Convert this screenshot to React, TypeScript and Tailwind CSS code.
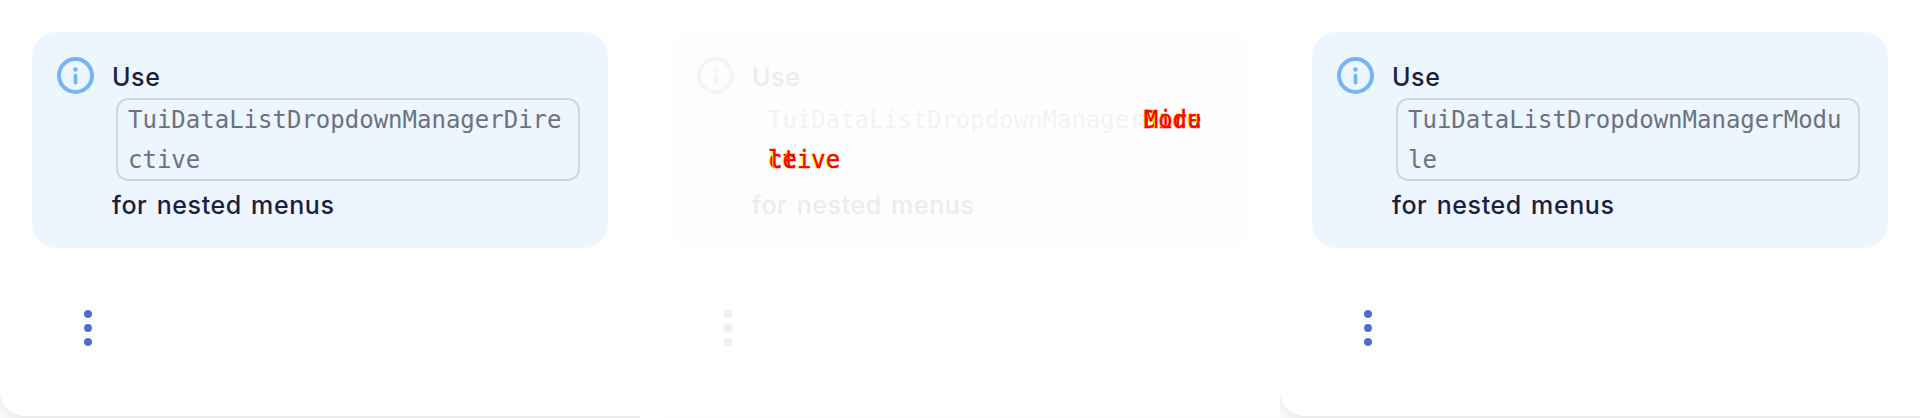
const CODE_FONT = "font-['DejaVu_Sans_Mono',monospace]";

function InfoIcon({ className }: { className: string }) {
  return (
    <svg viewBox="0 0 37 37" className={className} fill="none">
      <circle cx="18.5" cy="18.5" r="16.5" stroke="currentColor" strokeWidth="4" />
      <circle cx="18.5" cy="12.5" r="2.2" fill="currentColor" />
      <path d="M18.5 18.5v7" stroke="currentColor" strokeWidth="3.8" strokeLinecap="round" />
    </svg>
  );
}

function DotsIcon({ color }: { color: string }) {
  return (
    <div className="ml-[52px] mt-[62px] flex flex-col gap-[6px]">
      <span className={`block h-[8px] w-[8px] rounded-full ${color}`} />
      <span className={`block h-[8px] w-[8px] rounded-full ${color}`} />
      <span className={`block h-[8px] w-[8px] rounded-full ${color}`} />
    </div>
  );
}

function Notice({ name }: { name: string }) {
  return (
    <div className="flex h-[216px] rounded-[24px] bg-[#edf5fe] pl-[25px] pt-[25px]">
      <InfoIcon className="h-[37px] w-[37px] shrink-0 text-[#70b6f8]" />
      <div className="ml-[18px] flex w-[470px] flex-col text-[25px] font-[450] leading-[40px] tracking-[0.6px] [word-spacing:2px] text-[#1b1f3b]">
        <div className="h-[41px]">Use</div>
        <code
          className={`ml-[4px] h-[83px] w-[464px] rounded-[12px] border-2 border-[#cfd6e2] pl-[10px] pr-[10px] text-[24px] font-normal leading-[40px] tracking-normal [word-spacing:0] break-all text-[#6b7280] ${CODE_FONT}`}
        >
          {name}
        </code>
        <div className="mt-[4px]">for nested menus</div>
      </div>
    </div>
  );
}

// two words caught on top of each other mid-transition
function Overlap({ a, b }: { a: string; b: string }) {
  const glitch = "text-[#ff0000] [-webkit-text-stroke:0.4px_#ff0000] [text-shadow:-1px_0_0_#ffff00]";
  return (
    <span className={`relative inline-block ${glitch}`}>
      {a}
      <span className="absolute left-0 top-0">{b}</span>
    </span>
  );
}

function FadedNotice() {
  return (
    <div className="flex h-[216px] rounded-[24px] bg-[#fdfdfd] pl-[25px] pt-[25px]">
      <InfoIcon className="h-[37px] w-[37px] shrink-0 text-[#f5f5f5]" />
      <div className="ml-[18px] flex w-[470px] flex-col text-[25px] font-[450] leading-[40px] tracking-[0.6px] [word-spacing:2px] text-[#ececec]">
        <div className="h-[41px]">Use</div>
        <code
          className={`ml-[4px] h-[83px] w-[464px] rounded-[12px] border-2 border-[#fefefe] bg-[#fefefe] pl-[10px] pr-[10px] text-[24px] font-normal leading-[40px] tracking-normal [word-spacing:0] break-all text-[#f3f3f3] ${CODE_FONT}`}
        >
          TuiDataListDropdownManager
          <Overlap a="Dire" b="Modu" />
          <Overlap a="ctive" b="le" />
        </code>
        <div className="mt-[4px]">for nested menus</div>
      </div>
    </div>
  );
}

function Panel({ children }: { children: React.ReactNode }) {
  return (
    <div className="h-[418px] w-[640px] shrink-0 overflow-hidden">
      <div className="h-[416px] w-[720px] rounded-b-[24px] bg-white px-[32px] pt-[32px] shadow-[0_4px_16px_rgba(0,0,0,0.12)]">
        <div className="w-[576px]">{children}</div>
      </div>
    </div>
  );
}

export default function App() {
  return (
    <div className="flex h-[418px] w-[1920px] overflow-hidden bg-white font-['Inter',sans-serif]">
      <Panel>
        <Notice name="TuiDataListDropdownManagerDirective" />
        <DotsIcon color="bg-[#526ed3]" />
      </Panel>
      <div className="h-[418px] w-[640px] shrink-0 overflow-hidden">
        <div className="h-[416px] w-[720px] rounded-b-[24px] bg-white px-[32px] pt-[32px] shadow-[0_1px_6px_rgba(0,0,0,0.012)]">
          <div className="w-[576px]">
            <FadedNotice />
            <DotsIcon color="bg-[#eeeeee]" />
          </div>
        </div>
      </div>
      <Panel>
        <Notice name="TuiDataListDropdownManagerModule" />
        <DotsIcon color="bg-[#526ed3]" />
      </Panel>
    </div>
  );
}
